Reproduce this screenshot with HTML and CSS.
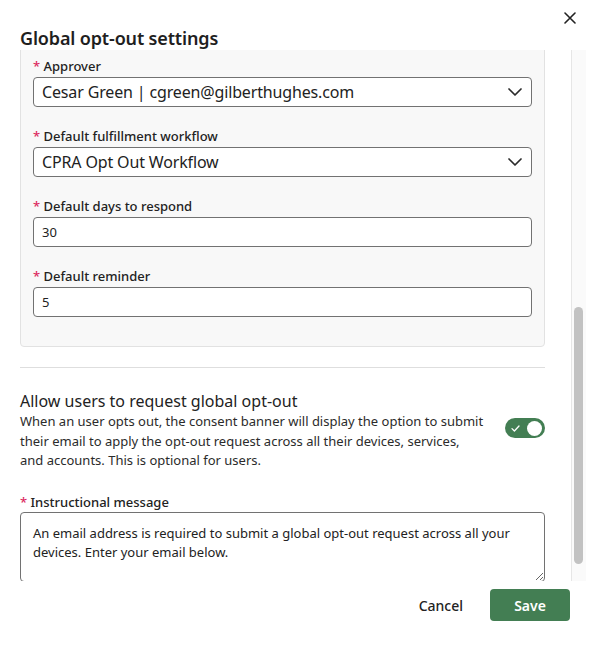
FILE: index.html
```html
<!DOCTYPE html>
<html lang="en">
<head>
<meta charset="utf-8">
<title>Global opt-out settings</title>
<link rel="stylesheet" href="styles.css">
</head>
<body>
<div class="dialog">
  <div class="topbar">
    <button class="close" aria-label="Close">
      <svg width="12" height="12" viewBox="0 0 12 12"><path d="M1 1 L11 11 M11 1 L1 11" stroke="#222" stroke-width="1.6" fill="none" stroke-linecap="round"/></svg>
    </button>
  </div>
  <h1 class="title">Global opt-out settings</h1>
  <div class="body">
    <div class="scroll">
      <div class="scroll-content">
        <div class="panel">
          <div class="field">
            <label class="label"><span class="req">*</span> Approver</label>
            <div class="select"><span>Cesar Green | cgreen@gilberthughes.com</span>
              <svg class="chev" width="14" height="8" viewBox="0 0 14 8"><path d="M1 1 L7 7 L13 1" stroke="#2b2b2b" stroke-width="1.7" fill="none" stroke-linecap="round" stroke-linejoin="round"/></svg>
            </div>
          </div>
          <div class="field">
            <label class="label"><span class="req">*</span> Default fulfillment workflow</label>
            <div class="select"><span>CPRA Opt Out Workflow</span>
              <svg class="chev" width="14" height="8" viewBox="0 0 14 8"><path d="M1 1 L7 7 L13 1" stroke="#2b2b2b" stroke-width="1.7" fill="none" stroke-linecap="round" stroke-linejoin="round"/></svg>
            </div>
          </div>
          <div class="field">
            <label class="label"><span class="req">*</span> Default days to respond</label>
            <input class="input" type="text" value="30">
          </div>
          <div class="field">
            <label class="label"><span class="req">*</span> Default reminder</label>
            <input class="input" type="text" value="5">
          </div>
        </div>
        <div class="divider"></div>
        <section class="optout">
          <h2 class="optout-title">Allow users to request global opt-out</h2>
          <div class="optout-row">
            <p class="optout-desc">When an user opts out, the consent banner will display the option to submit their email to apply the opt-out request across all their devices, services, and accounts. This is optional for users.</p>
            <span class="toggle">
              <svg class="check" width="9" height="7" viewBox="0 0 9 7"><path d="M1 3.6 L3.4 6 L8 1" stroke="#fff" stroke-width="1.3" fill="none" stroke-linecap="round" stroke-linejoin="round"/></svg>
              <span class="knob"></span>
            </span>
          </div>
        </section>
        <div class="field instr">
          <label class="label"><span class="req">*</span> Instructional message</label>
          <textarea class="textarea">An email address is required to submit a global opt-out request across all your devices. Enter your email below.</textarea>
        </div>
      </div>
    </div>
    <div class="scrollbar"><div class="thumb" style="margin-top:257px;height:257px"></div></div>
  </div>
  <div class="footer">
    <button class="btn-cancel">Cancel</button>
    <button class="btn-save">Save</button>
  </div>
</div>
</body>
</html>
```

FILE: styles.css
```css
* { box-sizing: border-box; }
html, body { margin: 0; padding: 0; background: #fff; }
body {
  font-family: "Noto Sans", "Open Sans", "Liberation Sans", sans-serif;
  color: #222;
  width: 592px;
  height: 646px;
  overflow: hidden;
}
.dialog { display: flex; flex-direction: column; width: 592px; }
.topbar {
  display: flex;
  justify-content: flex-end;
  padding: 12px 16px 0 0;
  height: 24px;
}
.close {
  border: 0; background: none; padding: 0; margin: 0;
  width: 12px; height: 12px; display: block; cursor: pointer;
}
.close svg { display: block; }
.title {
  margin: 3px 0 0 20px;
  font-size: 18px;
  line-height: 23px;
  font-weight: 600;
  letter-spacing: -0.15px;
  color: #1f1f1f;
}
.body {
  display: flex;
  height: 531px;
  padding-right: 6px;
}
.scroll {
  flex: 0 0 571px;
  overflow: hidden;
  padding: 0 26px 0 20px;
}
.scroll-content { margin-top: -10px; }
.scrollbar {
  flex: 0 0 15px;
  border-left: 1px solid #e6e6e6;
  background: #fafafa;
  padding-left: 2px;
}
.thumb {
  width: 9px;
  background: #c2c2c2;
  border-radius: 5px;
}
.panel {
  background: #f8f8f8;
  border: 1px solid #e2e2e2;
  border-radius: 4px;
  padding: 16px 12px 29px;
  display: flex;
  flex-direction: column;
  gap: 20px;
}
.field { display: flex; flex-direction: column; gap: 2px; }
.label {
  font-size: 13px;
  line-height: 18px;
  font-weight: 500;
  color: #222;
}
.req { color: #dc2a5f; }
.select, .input {
  height: 30px;
  border: 1px solid #727272;
  border-radius: 4px;
  background: #fff;
  padding: 0 8px;
}
.select {
  display: flex;
  align-items: center;
  justify-content: space-between;
  font-size: 16px;
  letter-spacing: -0.15px;
  color: #222;
  padding-right: 9px;
}
.chev { display: block; }
.input {
  font-family: inherit;
  font-size: 13px;
  color: #222;
  width: 100%;
  outline: none;
}
.divider {
  margin-top: 20px;
  border-top: 1px solid #dedede;
}
.optout { padding-top: 22px; }
.optout-title {
  margin: 0;
  font-size: 16px;
  line-height: 22px;
  font-weight: 400;
  color: #222;
}
.optout-row {
  display: flex;
  justify-content: space-between;
  align-items: flex-start;
}
.optout-desc {
  margin: 0;
  width: 466px;
  font-size: 13px;
  line-height: 19.5px;
  color: #2b2b2b;
}
.toggle {
  margin-top: 6px;
  width: 40px;
  height: 20px;
  border-radius: 10px;
  background: #437e53;
  display: flex;
  align-items: center;
  justify-content: space-between;
  padding: 0 3px 0 6px;
}
.check { display: block; }
.knob {
  width: 15px;
  height: 15px;
  border-radius: 50%;
  background: #fff;
}
.instr { margin-top: 22px; gap: 1px; }
.textarea {
  display: block;
  width: 100%;
  height: 70px;
  border: 1px solid #727272;
  border-radius: 4px;
  padding: 11px 12px;
  font-family: inherit;
  font-size: 13px;
  line-height: 19px;
  color: #222;
  resize: vertical;
  background: #fff;
}
.footer {
  display: flex;
  justify-content: flex-end;
  align-items: center;
  gap: 27px;
  padding: 8px 22px 0 0;
}
.btn-cancel {
  border: 0; background: none; padding: 0;
  font-family: inherit;
  font-size: 14px;
  font-weight: 500;
  color: #222;
}
.btn-save {
  width: 80px;
  height: 32px;
  border: 0;
  border-radius: 4px;
  background: #437e53;
  color: #fff;
  font-family: inherit;
  font-size: 14px;
  font-weight: 600;
}
```
